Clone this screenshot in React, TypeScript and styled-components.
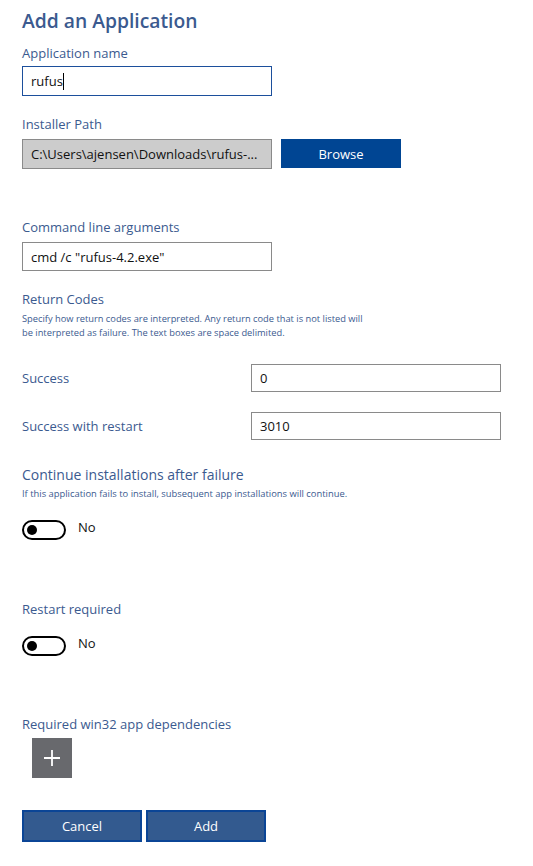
import React from "react";
import styled, { createGlobalStyle } from "styled-components";

const Global = createGlobalStyle`
  html, body { margin: 0; padding: 0; background: #ffffff; }
  body { font-family: "Open Sans", "Noto Sans", sans-serif; }
`;

const Page = styled.div`
  display: flex;
  flex-direction: column;
  align-items: flex-start;
  padding: 6px 0 20px 22px;
  width: 533px;
  box-sizing: border-box;
`;

const Title = styled.h1`
  margin: 0;
  font-size: 19.3px;
  font-weight: 600;
  line-height: 30px;
  color: #3b5a8f;
`;

const Label = styled.div<{ $top: number; $size?: number }>`
  margin-top: ${(p) => p.$top}px;
  font-size: ${(p) => p.$size ?? 13}px;
  line-height: 18px;
  color: #3b5a8f;
`;

const Hint = styled.div<{ $top: number; $size: number; $maxWidth?: number }>`
  margin-top: ${(p) => p.$top}px;
  font-size: ${(p) => p.$size}px;
  line-height: 14px;
  color: #3b5a8f;
  max-width: ${(p) => (p.$maxWidth ? `${p.$maxWidth}px` : "none")};
`;

const TextBox = styled.div<{ $top?: number; $height?: number; $focused?: boolean; $disabled?: boolean }>`
  margin-top: ${(p) => p.$top ?? 0}px;
  width: 250px;
  height: ${(p) => p.$height ?? 29}px;
  box-sizing: border-box;
  border: 1px solid ${(p) => (p.$focused ? "#1c4f9c" : "#8a8a8a")};
  background: ${(p) => (p.$disabled ? "#cccccc" : "#ffffff")};
  display: flex;
  align-items: center;
  padding-left: 8px;
  font-size: 13px;
  color: #111;
  white-space: nowrap;
  overflow: hidden;
`;

const Caret = styled.span`
  display: inline-block;
  width: 1px;
  height: 17px;
  background: #000;
`;

const Row = styled.div<{ $top: number; $gap?: number; $align?: string }>`
  margin-top: ${(p) => p.$top}px;
  display: flex;
  align-items: ${(p) => p.$align ?? "center"};
  gap: ${(p) => p.$gap ?? 9}px;
`;

const BrowseButton = styled.button`
  width: 120px;
  height: 29px;
  border: none;
  background: #004593;
  color: #ffffff;
  font-family: inherit;
  font-size: 13px;
  cursor: pointer;
  padding: 0;
`;

const CodeRow = styled.div<{ $top: number }>`
  margin-top: ${(p) => p.$top}px;
  display: grid;
  grid-template-columns: 229px 250px;
  align-items: center;
`;

const CodeLabel = styled.div`
  font-size: 13px;
  color: #3b5a8f;
`;

const Switch = styled.div`
  width: 44px;
  height: 20px;
  box-sizing: border-box;
  border: 2px solid #000;
  border-radius: 10px;
  position: relative;
  &::after {
    content: "";
    position: absolute;
    left: 3px;
    top: 3px;
    width: 10px;
    height: 10px;
    border-radius: 50%;
    background: #000;
  }
`;

const SwitchText = styled.span`
  font-size: 13px;
  line-height: 14px;
  color: #111;
`;

const PlusButton = styled.button`
  margin-top: 5px;
  margin-left: 10px;
  width: 40px;
  height: 40px;
  border: none;
  background: #68696d;
  display: flex;
  align-items: center;
  justify-content: center;
  padding: 0;
`;

const Footer = styled.div`
  margin-top: 32px;
  display: flex;
  gap: 4px;
`;

const ActionButton = styled.button`
  width: 120px;
  height: 32px;
  box-sizing: border-box;
  border: 2px solid #0b4596;
  background: #335a8f;
  color: #ffffff;
  font-family: inherit;
  font-size: 13px;
  cursor: pointer;
  padding: 0;
`;

export default function App() {
  return (
    <>
      <Global />
      <Page>
        <Title>Add an Application</Title>
        <Label $top={8}>Application name</Label>
        <TextBox $top={4} $height={30} $focused>
          rufus<Caret />
        </TextBox>
        <Label $top={19}>Installer Path</Label>
        <Row $top={6} $align="flex-start">
          <TextBox $height={30} $disabled>C:\Users\ajensen\Downloads\rufus-...</TextBox>
          <BrowseButton>Browse</BrowseButton>
        </Row>
        <Label $top={49}>Command line arguments</Label>
        <TextBox $top={6}>cmd /c "rufus-4.2.exe"</TextBox>
        <Label $top={19}>Return Codes</Label>
        <Hint $top={4} $size={9.3} $maxWidth={352}>
          Specify how return codes are interpreted. Any return code that is not listed will be
          interpreted as failure. The text boxes are space delimited.
        </Hint>
        <CodeRow $top={24}>
          <CodeLabel>Success</CodeLabel>
          <TextBox $height={28}>0</TextBox>
        </CodeRow>
        <CodeRow $top={20}>
          <CodeLabel>Success with restart</CodeLabel>
          <TextBox $height={28}>3010</TextBox>
        </CodeRow>
        <Label $top={26} $size={14}>Continue installations after failure</Label>
        <Hint $top={3} $size={9.4}>
          If this application fails to install, subsequent app installations will continue.
        </Hint>
        <Row $top={19} $gap={12} $align="flex-start">
          <Switch />
          <SwitchText>No</SwitchText>
        </Row>
        <Label $top={60}>Restart required</Label>
        <Row $top={18} $gap={12} $align="flex-start">
          <Switch />
          <SwitchText>No</SwitchText>
        </Row>
        <Label $top={59}>Required win32 app dependencies</Label>
        <PlusButton aria-label="Add dependency">
          <svg width="18" height="18" viewBox="0 0 18 18">
            <path d="M9 1v16M1 9h16" stroke="#ffffff" strokeWidth="1.8" />
          </svg>
        </PlusButton>
        <Footer>
          <ActionButton>Cancel</ActionButton>
          <ActionButton>Add</ActionButton>
        </Footer>
      </Page>
    </>
  );
}
